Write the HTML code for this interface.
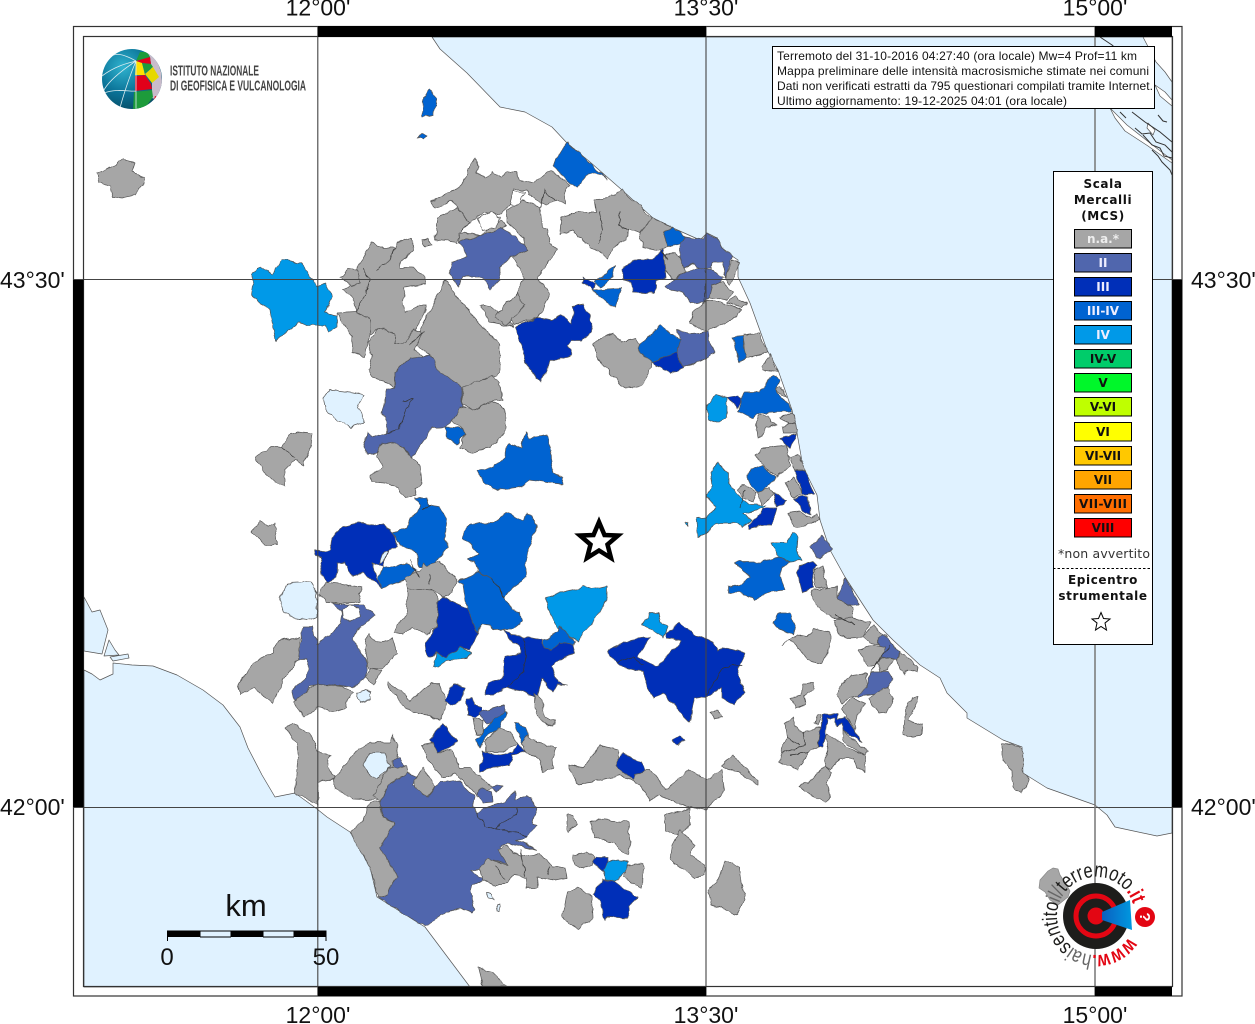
<!DOCTYPE html>
<html lang="it"><head><meta charset="utf-8"><title>Mappa intensità macrosismiche</title>
<style>
html,body{margin:0;padding:0;background:#fff}
svg{display:block}
.g{fill:#a6a6a6}.a{fill:#5066ad}.b{fill:#002fb8}.c{fill:#0063d1}.d{fill:#0099e8}.w{fill:#fff}.l{fill:#e0f2ff}
polygon{stroke:#555;stroke-width:.7;stroke-linejoin:round}
.ln{fill:none;stroke:#333;stroke-width:.7}
.lab{font:23px "Liberation Sans",sans-serif;fill:#111}
.inf{font:12px "Liberation Sans",sans-serif;fill:#111}
.leg{font:bold 12px "DejaVu Sans",sans-serif;fill:#111;text-anchor:middle;letter-spacing:.6px}
.sw{font:bold 12px "DejaVu Sans",sans-serif;fill:#111;text-anchor:middle}
</style></head><body>
<svg width="1255" height="1024" viewBox="0 0 1255 1024" xmlns="http://www.w3.org/2000/svg">
<defs>
<radialGradient id="gl" cx=".35" cy=".3" r=".8"><stop offset="0" stop-color="#2fb3cf"/><stop offset=".55" stop-color="#0a7196"/><stop offset="1" stop-color="#07485f"/></radialGradient>
<linearGradient id="cone" x1="0" x2="1"><stop offset="0" stop-color="#0a5fc0"/><stop offset="1" stop-color="#0099e0"/></linearGradient>
<path id="circ" d="M1128.7 937.2 A39 39 0 1 1 1133.1 904"/>
<clipPath id="gc"><circle cx="132" cy="79" r="30"/></clipPath>
<filter id="rough" x="0" y="0" width="1255" height="1024" filterUnits="userSpaceOnUse" color-interpolation-filters="sRGB">
<feTurbulence type="fractalNoise" baseFrequency=".11" numOctaves="2" seed="4" result="n"/>
<feDisplacementMap in="SourceGraphic" in2="n" scale="5" xChannelSelector="R" yChannelSelector="G"/>
</filter>
</defs>
<rect width="1255" height="1024" fill="#fff"/>
<!-- seas -->
<polygon class="l" points="432,37 440,49 467,73 500,107 525,112 552,127 567,143 590,162 622,190 633,200 653,218 673,228 700,240 707,233 717,238 723,250 738,260 738,277 750,303 767,350 778,370 792,410 797,433 803,467 817,495 820,520 830,550 845,577 873,620 893,640 920,665 940,678 947,693 967,713 967,718 1003,740 1022,747 1023,773 1047,788 1095,805 1107,815 1115,827 1157,836 1172,833 1172,37"/>
<polygon class="l" points="84,670 92,674 100,680 113,674 113,663 132,665 153,666 177,675 203,690 223,705 240,727 248,748 262,775 275,797 295,793 317,809 327,817 350,832 370,867 377,897 425,927 470,987 84,987"/>
<polygon class="l" points="84,597 92,612 100,610 108,630 102,654 84,651"/>
<polygon class="l" points="109,640 115,650 119,655 104,656"/>
<polygon class="l" points="110,657 128,654 129,658 113,661"/>
<polygon class="w" points="1143,37 1156,62 1165,72 1172,82 1172,37"/>
<polygon class="w" points="1155,85 1165,92 1172,100 1172,106 1160,96"/>
<polygon class="w" points="1110,108 1127,125 1150,143 1172,160 1172,163 1148,146 1125,131 1115,118"/>
<polygon class="w" points="1148,123 1155,130 1153,135 1147,128"/>
<path d="M1132 112 1145 122 1160 132 1172 142M1135 128 1142 134 1150 133 1156 142 1165 145 1172 152M1143 135 1152 145 1160 148 1164 156 1172 158M1152 150 1158 156 1162 162 1170 170 1172 175M1120 112l6 6M1158 115l5 6 4 1M1100 37l12 8 8 7" fill="none" stroke="#333" stroke-width="1"/>
<!-- map shapes -->
<g filter="url(#rough)">
<!-- north -->
<polygon class="g" points="97,173 110,167 123,160 135,163 132,172 145,177 143,185 135,195 122,198 113,197 110,187 98,182"/>
<polygon class="c" points="430,89 437,98 433,115 422,117 423,98"/>
<polygon class="c" points="422,134 427,136 423,140 418,137"/>
<polygon class="d" points="253,273 260,267 272,275 282,259 300,263 312,278 317,287 325,283 332,295 325,313 337,315 337,327 329,332 325,325 307,325 300,322 275,341 270,310 251,295 253,283"/>
<polygon class="g" points="473,158 479,166 475,173 486,178 493,172 500,178 507,172 517,172 520,180 532,183 542,177 550,170 555,173 570,185 565,193 565,205 557,200 545,205 528,195 527,190 515,190 510,205 500,215 485,212 470,222 458,208 452,200 435,208 430,202 460,187 468,173"/>
<polygon class="w" points="513,192 525,192 518,206 510,204"/>
<polygon class="g" points="507,210 523,200 540,207 542,227 547,230 550,243 557,250 545,268 537,277 550,293 543,310 538,317 513,325 507,303 517,293 525,278 513,257 525,250 523,237 507,223"/>
<polygon class="g" points="435,240 438,218 457,208 470,222 462,230 458,243"/>
<polygon class="g" points="460,232 480,236 500,221 507,226 500,232 460,243"/>
<polygon class="w" points="478,218 490,212 500,218 495,228 482,230"/>
<polygon class="a" points="460,242 495,231 500,228 517,238 528,250 510,257 500,267 500,280 490,290 483,277 463,277 458,286 448,273 452,262 468,257"/>
<polygon class="g" points="422,240 428,238 431,245 425,247"/>
<polygon class="g" points="357,268 372,242 377,247 395,247 398,242 412,238 413,250 400,262 400,268 413,268 425,278 425,283 405,287 403,303 405,313 420,305 427,305 425,313 415,330 420,333 413,345 395,343 395,333 380,328 370,335 370,320 357,312 353,298 343,290 356,280"/>
<polygon class="g" points="341,278 349,268 357,269 361,283 352,286"/>
<polygon class="g" points="445,280 465,307 480,325 500,345 500,372 478,388 462,400 440,372 430,355 415,345 425,320 435,300"/>
<polygon class="g" points="480,305 490,306 507,318 513,327 490,322"/>
<polygon class="g" points="337,313 357,312 370,320 370,335 367,343 365,357 352,352 353,337 343,323"/>
<polygon class="g" points="368,342 380,328 395,333 395,343 405,343 413,330 422,333 415,350 425,358 410,358 395,372 395,387 387,382 372,378 368,370 372,355"/>
<polygon class="g" points="507,303 517,293 525,305 507,325 495,318"/>
<!-- adriatic north -->
<polygon class="c" points="567,143 580,153 607,180 597,173 588,175 577,188 568,182 553,165"/>
<polygon class="g" points="595,200 608,198 622,190 633,200 653,218 640,233 628,230 627,240 613,247 608,260 600,252 585,243 573,230 560,235 562,217 580,212 597,212"/>
<polygon class="g" points="640,233 653,218 673,228 663,233 670,247 658,250 643,247"/>
<polygon class="c" points="663,232 673,227 685,237 683,243 668,247"/>
<polygon class="a" points="680,243 685,237 703,240 707,233 717,238 723,250 733,257 725,277 722,262 712,262 712,268 700,268 693,263 683,267 680,257"/>
<polygon class="w" points="712,262 722,262 725,277 716,278 711,270"/>
<polygon class="g" points="733,260 739,263 733,278 730,285 725,278"/>
<polygon class="g" points="663,257 675,252 680,257 682,265 685,272 673,280 663,268"/>
<polygon class="a" points="665,287 673,281 685,272 700,267 713,270 722,278 710,297 705,302 690,302 683,292 670,290"/>
<polygon class="b" points="622,270 633,260 652,260 663,249 666,277 656,280 655,293 632,292 632,282 623,280"/>
<polygon class="b" points="583,277 597,285 593,290 583,283"/>
<polygon class="c" points="595,282 615,265 613,277 600,287"/>
<polygon class="c" points="593,290 622,288 615,308 607,303"/>
<polygon class="b" points="515,327 538,317 552,320 562,315 572,323 573,307 583,305 593,323 590,333 582,340 572,340 568,345 572,355 550,362 546,372 540,382 533,372 525,362 522,345"/>
<polygon class="g" points="593,343 613,333 622,342 635,338 650,357 652,368 642,385 625,388 612,375 598,360"/>
<polygon class="c" points="637,347 660,325 680,340 678,352 652,363 642,353"/>
<polygon class="b" points="652,363 677,352 683,368 670,373"/>
<polygon class="a" points="678,330 690,333 708,332 710,342 715,353 702,360 683,367 676,353 680,340"/>
<polygon class="g" points="690,323 693,313 703,303 710,300 730,305 742,310 733,320 713,328 707,332"/>
<polygon class="g" points="710,297 713,285 722,282 733,292 727,300"/>
<polygon class="g" points="727,302 735,297 747,303 742,308"/>
<polygon class="c" points="733,337 743,336 747,358 739,362"/>
<polygon class="g" points="743,335 758,333 768,352 747,358 745,350"/>
<polygon class="g" points="762,367 770,353 778,372 763,370"/>
<!-- umbria -->
<polygon class="a" points="395,372 410,358 430,355 440,372 462,387 462,407 452,422 445,427 433,428 427,437 412,458 403,447 393,445 382,445 378,453 368,455 363,448 367,433 373,437 387,433 387,422 382,412 387,390 395,387"/>
<polygon class="c" points="445,427 463,428 465,433 457,445 447,438"/>
<polygon class="g" points="463,387 482,380 492,375 500,383 502,400 490,402 473,410 462,405"/>
<polygon class="g" points="452,422 460,407 473,410 493,402 505,408 505,433 490,447 473,453 460,448 465,433 463,428"/>
<polygon class="g" points="380,445 395,443 403,448 412,458 420,465 422,483 415,488 417,495 405,498 397,488 385,483 372,482 370,475 383,467 378,457"/>
<polygon class="c" points="477,470 493,467 505,457 508,443 522,448 525,433 530,438 547,435 552,450 550,460 553,473 563,478 562,484 550,483 530,480 520,487 497,490 483,482"/>
<polygon class="g" points="255,457 270,447 282,447 290,433 298,431 312,433 310,450 303,465 295,460 285,470 285,487 273,480 262,470"/>
<polygon class="g" points="252,532 260,520 268,527 275,523 278,545 265,545 258,537"/>
<polygon class="l" points="323,398 330,389 363,395 357,408 365,422 350,427 333,418 325,408"/>
<polygon class="b" points="313,550 320,552 330,550 332,537 343,527 360,523 373,525 383,523 393,533 398,547 388,550 383,567 372,563 377,578 382,588 363,572 353,577 345,563 337,563 337,577 327,582 320,573 323,558 315,555"/>
<polygon class="l" points="383,552 387,551 384,562 379,564"/>
<polygon class="c" points="415,498 427,498 428,505 438,507 447,518 445,540 448,547 430,568 418,567 417,553 400,545 393,533 407,528 410,518 418,513 420,506"/>
<polygon class="c" points="383,568 400,565 407,563 417,570 405,580 382,588 378,578"/>
<polygon class="g" points="405,578 420,570 423,563 427,567 440,560 445,567 458,580 450,595 442,597 432,590 417,592 407,588"/>
<polygon class="g" points="407,588 432,590 438,600 437,627 427,635 412,627 403,633 395,633 397,625 407,615"/>
<polygon class="c" points="463,532 470,523 493,523 507,513 523,522 528,513 537,525 528,552 525,562 527,577 513,587 505,597 492,578 478,572 475,563 468,560 478,555 472,545 463,538"/>
<polygon class="c" points="458,582 478,572 492,578 505,597 512,610 520,613 522,622 512,630 500,630 483,623 477,632 467,610 463,585"/>
<polygon class="b" points="438,600 443,597 467,608 477,633 470,650 460,647 448,658 437,653 427,658 425,643 437,627"/>
<polygon class="d" points="437,653 447,657 460,647 472,653 467,658 447,660 437,668 433,667"/>
<polygon class="d" points="545,597 563,592 580,588 583,585 592,588 607,585 607,600 595,620 583,633 578,642 558,627 550,613"/>
<polygon class="c" points="543,640 558,632 560,626 575,642 573,645 553,650 543,648"/>
<polygon class="b" points="503,630 512,635 527,637 542,640 543,648 553,650 560,642 573,645 575,653 557,660 552,667 558,683 567,685 557,685 553,692 542,678 537,698 523,692 507,687 493,695 485,695 488,683 503,678 505,657 522,653 520,645 512,642"/>
<path class="ln" d="M523,637 526,655 524,672 507,687"/>
<polygon class="a" points="333,603 350,605 363,605 375,615 357,630 353,638 367,663 365,678 352,688 330,685 310,687 295,703 292,690 307,677 308,660 298,660 303,627 313,627 317,645 340,625 342,612"/>
<polygon class="w" points="342,610 350,605 358,608 360,616 350,622 343,618"/>
<polygon class="l" points="280,600 287,583 310,582 317,593 317,617 307,620 293,618 284,612"/>
<polygon class="g" points="322,587 327,582 340,583 363,588 358,594 360,602 347,603 327,602 320,595"/>
<polygon class="g" points="368,635 377,642 393,638 397,653 383,668 368,668 365,653"/>
<polygon class="g" points="370,667 382,670 373,685 365,678"/>
<polygon class="g" points="278,640 300,637 298,660 283,680 273,703 260,693 255,687 240,695 237,687 253,663 273,653"/>
<polygon class="g" points="308,690 318,685 343,687 353,693 347,700 347,708 333,712 318,707 303,717 293,702"/>
<polygon class="l" points="356,693 365,690 371,692 370,700 360,702"/>
<!-- lazio -->
<polygon class="g" points="285,728 292,723 313,737 318,752 330,755 327,768 337,778 318,783 318,805 295,793 298,763 297,743"/>
<polygon class="g" points="333,780 357,750 370,743 390,743 393,735 398,743 397,758 390,770 405,768 385,787 380,800 353,799 335,788"/>
<polygon class="l" points="363,765 370,753 385,753 390,767 377,779 370,775"/>
<polygon class="a" points="392,760 400,758 405,768 393,769"/>
<polygon class="g" points="388,769 407,766 407,773 387,785 380,802 374,795"/>
<polygon class="a" points="380,803 387,785 400,778 407,772 418,777 413,785 428,797 435,787 442,782 460,780 465,787 475,797 473,807 477,813 485,808 503,803 515,792 515,800 527,796 532,798 537,808 532,823 537,825 527,837 517,840 538,850 508,843 500,847 510,865 493,860 480,870 470,870 485,880 472,885 470,890 475,910 472,913 460,908 447,912 425,926 378,897 388,890 398,877 380,848 395,822 383,817"/>
<path class="ln" d="M477,813 485,826 497,830 517,832 527,837M517,808 517,815 500,824 497,830"/>
<polygon class="g" points="367,808 370,802 380,802 383,817 395,822 380,848 398,877 388,890 387,895 377,897 370,867 350,832 362,823"/>
<polygon class="g" points="415,780 423,768 435,787 427,797 415,787"/>
<polygon class="g" points="498,850 507,845 513,853 530,857 540,853 553,867 565,867 567,878 555,880 537,877 538,888 525,888 527,877 513,875 507,883 493,885 483,880 480,870 487,858 497,862 507,865"/>
<polygon class="l" points="487,892 493,894 495,899 489,898"/>
<polygon class="l" points="497,905 500,904 499,911 497,911"/>
<polygon class="g" points="388,682 400,690 410,702 430,683 440,683 447,705 440,720 427,715 412,712 403,705 390,690"/>
<polygon class="b" points="445,702 453,683 465,688 460,700 452,705"/>
<polygon class="b" points="467,698 472,698 475,705 482,707 482,713 475,717 468,715"/>
<polygon class="g" points="473,718 483,720 482,735 476,735"/>
<polygon class="a" points="478,713 505,705 505,715 500,720 487,723"/>
<polygon class="c" points="483,730 505,710 507,713 500,728 488,735 480,747 476,740 482,735"/>
<polygon class="g" points="485,742 498,728 510,732 518,743 503,752 485,752"/>
<polygon class="b" points="482,750 485,753 500,755 513,752 518,743 525,752 512,755 510,765 495,767 480,772 480,765 484,760"/>
<polygon class="c" points="513,723 525,727 528,737 523,743 517,730"/>
<polygon class="g" points="523,743 527,735 538,743 557,748 552,760 553,768 543,772 538,758 525,752"/>
<polygon class="g" points="535,693 542,700 545,717 555,720 553,727 540,722 535,708"/>
<polygon class="b" points="430,740 443,723 450,733 457,742 450,748 438,753"/>
<polygon class="g" points="423,745 433,743 438,753 452,750 460,768 470,768 480,777 492,787 478,797 468,785 455,773 442,777 433,767 427,758"/>
<polygon class="a" points="490,785 502,787 497,792"/>
<polygon class="a" points="480,788 492,792 493,802 483,803 478,795"/>
<polygon class="g" points="569,765 582,768 600,745 617,750 625,770 650,770 665,790 690,770 707,780 722,770 725,790 706,810 680,805 660,795 650,800 640,785 620,775 600,780 580,785 572,775"/>
<polygon class="b" points="615,765 623,753 640,762 645,770 635,775 633,780"/>
<polygon class="g" points="567,815 573,815 577,823 567,832"/>
<polygon class="g" points="590,822 600,819 628,822 630,843 628,855 612,843 595,837"/>
<polygon class="g" points="573,855 587,852 595,857 593,865 580,868 575,865"/>
<polygon class="b" points="593,862 597,857 607,857 608,863 603,872"/>
<polygon class="d" points="608,862 618,860 628,862 627,870 615,882 605,880 603,870"/>
<polygon class="g" points="628,865 643,863 642,888 623,877"/>
<polygon class="b" points="593,895 602,880 615,882 623,888 638,897 630,907 628,918 607,917 605,920 600,900"/>
<polygon class="g" points="568,893 578,887 592,897 593,918 577,929 562,917 565,907"/>
<polygon class="g" points="478,967 492,972 507,987 483,987"/>
<polygon class="g" points="665,815 690,808 690,825 680,835 665,830"/>
<polygon class="g" points="680,830 695,845 690,855 705,865 705,875 695,878 670,860 672,845"/>
<polygon class="g" points="725,860 740,868 745,900 738,915 712,905 708,890 718,880"/>
<polygon class="g" points="722,765 733,755 745,768 758,780 758,785 740,772 728,770"/>
<!-- marche sud / abruzzo -->
<polygon class="d" points="707,408 715,394 727,397 727,417 717,423 708,420"/>
<polygon class="b" points="727,397 738,395 742,400 737,408"/>
<polygon class="c" points="742,400 745,392 760,392 772,375 780,380 775,390 790,407 792,412 773,412 762,413 753,418 738,410"/>
<polygon class="g" points="775,390 780,387 787,398"/>
<polygon class="g" points="755,425 760,415 768,415 770,423 777,425 767,427 763,435 757,438"/>
<polygon class="g" points="780,418 793,413 795,422 790,425"/>
<polygon class="g" points="782,427 795,423 797,433 783,433"/>
<polygon class="b" points="780,438 797,434 790,448"/>
<polygon class="g" points="755,455 763,448 787,445 790,465 777,477 763,465"/>
<polygon class="g" points="790,458 798,455 805,470 795,470"/>
<polygon class="b" points="795,471 805,470 813,493 803,495"/>
<polygon class="b" points="793,498 807,496 811,515 803,510"/>
<polygon class="g" points="785,483 795,478 803,495 792,497"/>
<polygon class="c" points="748,478 750,470 763,466 776,478 767,487 760,492 752,487"/>
<polygon class="d" points="710,473 718,462 728,473 728,483 738,495 748,505 767,505 757,510 743,513 752,520 743,527 738,523 715,523 707,533 698,537 696,518 707,517 716,507 707,497 712,485"/>
<polygon class="g" points="738,490 743,485 757,492 753,502 743,498"/>
<polygon class="g" points="758,492 770,488 773,493 767,500 762,505"/>
<polygon class="b" points="773,492 787,502 777,507"/>
<polygon class="b" points="748,525 760,515 763,508 777,508 772,525 760,525 750,529"/>
<polygon class="g" points="788,513 800,510 811,518 818,513 820,520 798,528 795,527"/>
<polygon class="d" points="685,523 689,524 687,526"/>
<polygon class="d" points="771,543 787,541 793,533 798,537 797,550 801,561 790,562 778,557"/>
<polygon class="c" points="734,562 760,562 778,557 790,562 782,567 780,575 785,590 767,592 755,600 740,593 728,593 728,587 740,585 750,577"/>
<polygon class="a" points="810,547 822,535 831,548 820,560"/>
<polygon class="b" points="797,572 800,565 813,561 817,565 812,570 813,588 802,592"/>
<polygon class="g" points="813,570 822,567 828,587 815,588"/>
<polygon class="g" points="810,593 813,590 837,587 837,597 853,608 852,620 833,618 820,610"/>
<polygon class="a" points="837,597 845,578 860,605 848,606"/>
<polygon class="g" points="833,620 853,618 870,623 863,637 850,638 840,635"/>
<polygon class="g" points="863,637 873,625 887,637 883,645 870,643"/>
<polygon class="a" points="877,637 883,635 900,652 895,660 883,657 880,648"/>
<polygon class="g" points="900,653 918,667 917,672 908,670 905,675 895,660"/>
<polygon class="g" points="858,650 875,645 885,647 882,657 875,665 867,665"/>
<polygon class="g" points="877,662 883,657 893,660 888,670 880,672"/>
<polygon class="a" points="870,672 888,672 893,680 880,693 858,696 857,693 868,688"/>
<polygon class="g" points="872,695 887,687 893,698 887,712 878,713 868,698"/>
<polygon class="g" points="837,695 842,683 850,678 852,675 867,673 868,687 857,695 850,697 843,703"/>
<polygon class="g" points="842,708 852,697 865,703 858,715 855,730 847,718"/>
<polygon class="g" points="782,646 797,635 807,637 813,628 830,632 830,647 822,665 808,660 800,650 790,640"/>
<polygon class="c" points="773,622 778,613 790,613 795,627 793,635 788,632 777,627"/>
<polygon class="g" points="803,683 814,683 812,690 805,695 806,705 795,709 790,698 802,695"/>
<polygon class="g" points="903,735 905,710 912,697 918,697 915,707 908,720 923,725 922,735 910,737"/>
<polygon class="g" points="815,723 818,714 822,715 818,725"/>
<polygon class="g" points="785,723 793,718 795,727 803,733 817,727 820,728 818,747 808,752 798,770 792,768 778,762 782,753 783,742 787,738"/>
<path class="ln" d="M803,733 805,745 782,753M787,738 800,745M808,752 790,755"/>
<polygon class="g" points="825,737 827,733 840,743 853,750 865,755 865,772 857,768 853,758 840,758 830,770 825,765 828,747"/>
<polygon class="g" points="843,730 862,747 868,752 865,755 853,748 843,742"/>
<polygon class="b" points="818,747 820,728 823,715 837,713 838,720 845,717 862,742 843,730 842,722 837,727 835,718 827,718 825,737 823,747"/>
<polygon class="g" points="800,786 808,783 825,765 831,773 827,782 830,798 826,803 815,797 805,792"/>
<polygon class="g" points="1002,743 1022,747 1023,773 1030,780 1020,793 1013,787 1012,772 1002,760"/>
<!-- central big III -->
<polygon class="d" points="643,625 650,613 658,613 660,622 667,627 663,637"/>
<polygon class="b" points="607,652 623,642 650,637 638,657 657,667 682,640 667,638 665,633 680,623 695,635 707,640 713,643 717,650 723,647 745,653 740,665 738,675 745,693 733,705 722,698 722,687 710,695 695,698 690,722 685,717 663,693 653,698 648,687 643,672 623,668 617,663"/>
<path class="ln" d="M617,663 633,657 643,665M743,665 732,665 722,670 712,685 707,694"/>
<polygon class="b" points="673,740 680,736 685,740 678,746"/>
<polygon class="g" points="710,713 717,710 721,717 715,719"/>
<!-- interior borders -->
<path class="ln" d="M403,400 412,400 405,412 398,430 387,433M282,447 295,458M555,200 545,190 540,207M600,212 603,230 598,243M620,210 618,225 628,230M422,510 432,505M492,578 505,597M363,268 370,280 357,312M395,247 388,262 375,270M470,222 462,230M425,330 410,345M430,575 428,585M410,560 420,578M740,508 745,490M660,250 668,260M705,302 705,270M835,615 855,625M890,645 870,672M520,850 525,875M495,865 505,880M550,867 548,875"/>
</g>
<!-- graticule -->
<g stroke="#444" stroke-width="1.1" fill="none">
<path d="M74 279.5H1182M74 807.5H1182M317.8 26V996M706 26V996"/>
<path d="M1095 26V996" stroke="#777" stroke-width="1.5"/>
</g>
<!-- frame -->
<rect x="73.5" y="26.5" width="1108.5" height="969.5" fill="none" stroke="#333" stroke-width="1.2"/>
<rect x="83.5" y="36.5" width="1089" height="950" fill="none" stroke="#333" stroke-width="1.2"/>
<g fill="#000">
<rect x="318" y="26" width="388" height="11"/><rect x="1095" y="26" width="77" height="11"/>
<rect x="318" y="987" width="388" height="9"/><rect x="1095" y="987" width="77" height="9"/>
<rect x="73" y="280" width="10.5" height="527"/><rect x="1172" y="280" width="10" height="527"/>
</g>
<!-- labels -->
<g class="lab" text-anchor="middle">
<text x="318" y="15.5">12°00'</text><text x="706" y="15.5">13°30'</text><text x="1095" y="15.5">15°00'</text>
<text x="318" y="1023">12°00'</text><text x="706" y="1023">13°30'</text><text x="1095" y="1023">15°00'</text>
</g>
<text class="lab" x="0" y="288">43°30'</text><text class="lab" x="0" y="815">42°00'</text>
<text class="lab" x="1191" y="288">43°30'</text><text class="lab" x="1191" y="815">42°00'</text>
<!-- star -->
<path d="M599 522 604.5 535 618 535.5 607.5 544.5 611 558 599 550.5 587 558 590.5 544.5 580 535.5 593.5 535Z" fill="#fff" stroke="#000" stroke-width="4.5" stroke-linejoin="miter"/>
<!-- scale -->
<text x="246" y="916" font-family="Liberation Sans,sans-serif" font-size="31" text-anchor="middle" fill="#111">km</text>
<g fill="#000"><rect x="168" y="931" width="32" height="6"/><rect x="231" y="931" width="32" height="6"/><rect x="294" y="931" width="32" height="6"/></g>
<path d="M167.5 941V931H326V941M200 931V937M231 931V937M263 931V937M294 931V937M200 937H231M263 937H294" fill="none" stroke="#000" stroke-width="1"/>
<g font-family="Liberation Sans,sans-serif" font-size="24" text-anchor="middle" fill="#111"><text x="167" y="965">0</text><text x="326" y="965">50</text></g>
<!-- INGV logo -->
<circle cx="132" cy="79" r="30" fill="url(#gl)"/>
<g clip-path="url(#gc)">
<polygon style="stroke:none" fill="#c9bccb" points="147,52 157,60 161,72 163,90 158,100 152,98 152,84 151,64 150,57"/>
<polygon style="stroke:none" fill="#1d9b3b" points="136,61 140,52 147,52 150,57"/>
<polygon style="stroke:none" fill="#e2001a" points="136,61 150,57 151,64 142,63"/>
<polygon style="stroke:none" fill="#ffe000" points="136,61 142,63 145,75 135,75"/>
<polygon style="stroke:none" fill="#1d9b3b" points="142,63 151,64 153,67 145,73"/>
<polygon style="stroke:none" fill="#e6d800" points="145,74 153,67 159,77 152,83"/>
<polygon style="stroke:none" fill="#e2001a" points="135,76 145,75 151,84 152,89 135,91"/>
<polygon style="stroke:none" fill="#1d9b3b" points="134,92 152,90 153,97 145,108 133,110"/>
<polygon style="stroke:none" fill="#e2001a" points="155,96 158,97 153,103"/>
<g fill="none" stroke="#dcecf0" stroke-width=".8">
<path d="M136 61 C120 52 112 52 106 62M136 61C128 80 122 100 120 108M136 61C115 75 106 85 103 92M136 61V110M102 76C115 66 128 63 136 61M104 93C118 88 130 92 136 91"/>
</g></g>
<g font-family="Liberation Sans,sans-serif" fill="#444" font-size="15" font-weight="bold">
<text x="170" y="75.5" textLength="89" lengthAdjust="spacingAndGlyphs">ISTITUTO NAZIONALE</text>
<text x="170" y="90.5" textLength="136" lengthAdjust="spacingAndGlyphs">DI GEOFISICA E VULCANOLOGIA</text>
</g>
<!-- info box -->
<rect x="772.5" y="46.5" width="382" height="62" fill="#fff" stroke="#000" stroke-width="1"/>
<g class="inf">
<text x="777" y="60" textLength="360">Terremoto del 31-10-2016 04:27:40 (ora locale) Mw=4 Prof=11 km</text>
<text x="777" y="75" textLength="372">Mappa preliminare delle intensità macrosismiche stimate nei comuni</text>
<text x="777" y="90" textLength="376">Dati non verificati estratti da 795 questionari compilati tramite Internet.</text>
<text x="777" y="105" textLength="290">Ultimo aggiornamento: 19-12-2025 04:01 (ora locale)</text>
</g>
<!-- legend -->
<rect x="1053.5" y="171.5" width="99" height="473" fill="#fff" stroke="#000" stroke-width="1"/>
<text class="leg" x="1103" y="188">Scala</text><text class="leg" x="1103" y="204">Mercalli</text><text class="leg" x="1103" y="220">(MCS)</text>
<g stroke="#000" stroke-width="1">
<rect x="1074.5" y="229.5" width="57" height="18.5" fill="#a6a6a6"/>
<rect x="1074.5" y="253.5" width="57" height="18.5" fill="#5066ad"/>
<rect x="1074.5" y="277.5" width="57" height="18.5" fill="#002fb8"/>
<rect x="1074.5" y="301.5" width="57" height="18.5" fill="#0063d1"/>
<rect x="1074.5" y="325.5" width="57" height="18.5" fill="#0099e8"/>
<rect x="1074.5" y="349.5" width="57" height="18.5" fill="#00cc6a"/>
<rect x="1074.5" y="373.5" width="57" height="18.5" fill="#00f72a"/>
<rect x="1074.5" y="397.5" width="57" height="18.5" fill="#bfff00"/>
<rect x="1074.5" y="422.5" width="57" height="18.5" fill="#ffff00"/>
<rect x="1074.5" y="446.5" width="57" height="18.5" fill="#ffc800"/>
<rect x="1074.5" y="470.5" width="57" height="18.5" fill="#ffa500"/>
<rect x="1074.5" y="494.5" width="57" height="18.5" fill="#ff6e00"/>
<rect x="1074.5" y="518.5" width="57" height="18.5" fill="#ff0000"/>
</g>
<g class="sw">
<text x="1103" y="243" style="fill:#eee">n.a.*</text>
<text x="1103" y="267" style="fill:#eef">II</text>
<text x="1103" y="291" style="fill:#eef">III</text>
<text x="1103" y="315" style="fill:#eef">III-IV</text>
<text x="1103" y="339" style="fill:#eef">IV</text>
<text x="1103" y="363">IV-V</text>
<text x="1103" y="387">V</text>
<text x="1103" y="411">V-VI</text>
<text x="1103" y="436">VI</text>
<text x="1103" y="460">VI-VII</text>
<text x="1103" y="484">VII</text>
<text x="1103" y="508" textLength="48">VII-VIII</text>
<text x="1103" y="532">VIII</text>
</g>
<text x="1104" y="558" font-family="DejaVu Sans,sans-serif" font-size="12.5" text-anchor="middle" fill="#333" textLength="92">*non avvertito</text>
<path d="M1053 568.5H1151" stroke="#000" stroke-width="1" stroke-dasharray="2.5 2"/>
<text class="leg" x="1103" y="584">Epicentro</text><text class="leg" x="1103" y="600">strumentale</text>
<path d="M1101 612.5 1103.5 618.5 1110 619 1105 623 1106.5 630 1101 626.5 1095.5 630 1097 623 1092 619 1098.5 618.5Z" fill="#fff" stroke="#000" stroke-width="1"/>
<!-- haisentito logo -->
<polygon class="g" style="stroke:#888" points="1040,880 1048,871 1053,868 1058,869 1060,875 1066,884 1070,891 1068,897 1058,905 1050,900 1045,892 1039,888"/>
<circle cx="1096" cy="916" r="33" fill="#1d1d1b"/>
<circle cx="1096" cy="916" r="20" fill="none" stroke="#e30613" stroke-width="5"/>
<circle cx="1096" cy="916" r="8.5" fill="#e30613"/>
<polygon style="stroke:none" fill="url(#cone)" points="1102,912 1130,900 1132,930 1102,920"/>
<circle cx="1145" cy="917" r="10" fill="#e30613"/>
<text x="1145" y="917" transform="rotate(90 1145 917)" dy="5" font-family="Liberation Sans,sans-serif" font-weight="bold" font-size="15" fill="#fff" text-anchor="middle">?</text>
<text font-family="Liberation Sans,sans-serif" font-size="21" fill="#1d1d1b"><textPath href="#circ" textLength="210" lengthAdjust="spacingAndGlyphs"><tspan fill="#e30613" font-weight="bold">www.</tspan><tspan fill="#666">hai</tspan>sentito<tspan fill="#666">il/</tspan>terremoto<tspan fill="#e30613" font-weight="bold">.it</tspan></textPath></text>
</svg>
</body></html>
